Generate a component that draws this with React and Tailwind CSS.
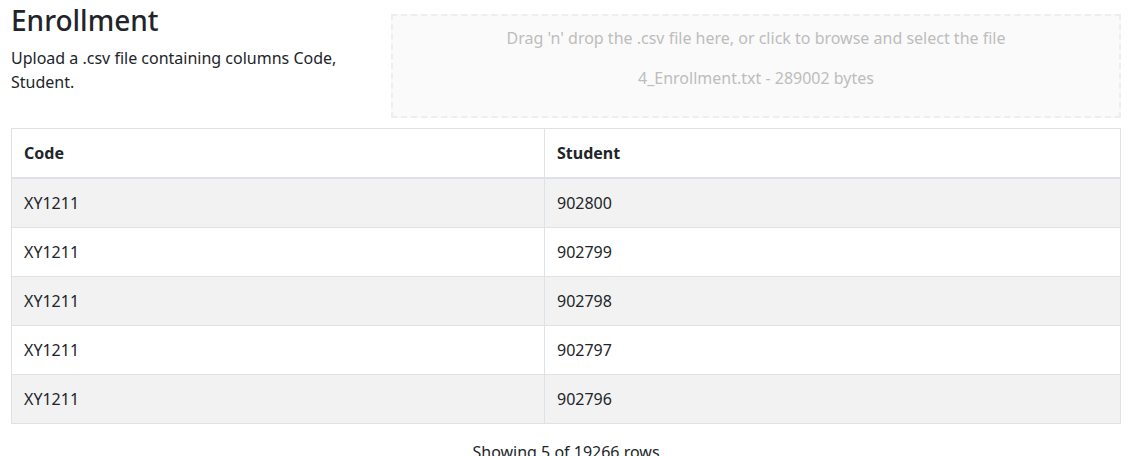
import React from 'react';

const rows = [
  { code: 'XY1211', student: '902800' },
  { code: 'XY1211', student: '902799' },
  { code: 'XY1211', student: '902798' },
  { code: 'XY1211', student: '902797' },
  { code: 'XY1211', student: '902796' },
];

export default function App() {
  return (
    <div
      className="min-h-screen bg-white pl-[11px] pr-[7px] pt-[4px] text-[#212529]"
      style={{ fontFamily: '"Noto Sans", "Open Sans", sans-serif' }}
    >
      <div className="flex items-start gap-[30px]">
        <div className="w-[350px] shrink-0">
          <h3 className="mb-2 text-[28px] font-medium leading-[1.2]">Enrollment</h3>
          <p className="mb-4 text-base leading-6">
            Upload a .csv file containing columns Code, Student.
          </p>
        </div>
        <div className="mt-[10px] flex-1 cursor-pointer border-2 border-dashed border-[#eeeeee] bg-[#fafafa] py-[10px] text-center text-[#bdbdbd]">
          <p className="mb-4 text-base leading-6">
            Drag 'n' drop the .csv file here, or click to browse and select the file
          </p>
          <p className="mb-4 text-base leading-6">4_Enrollment.txt - 289002 bytes</p>
        </div>
      </div>

      <table className="mt-[10px] w-full table-fixed border-collapse border border-[#dee2e6] text-base leading-6">
        <thead>
          <tr>
            <th className="w-[533px] border border-b-2 border-[#dee2e6] px-3 py-3 text-left font-bold">
              Code
            </th>
            <th className="border border-b-2 border-[#dee2e6] px-3 py-3 text-left font-bold">
              Student
            </th>
          </tr>
        </thead>
        <tbody>
          {rows.map((r, i) => (
            <tr key={r.student} className={i % 2 === 0 ? 'bg-[#f2f2f2]' : 'bg-white'}>
              <td className="border border-[#dee2e6] px-3 py-3">{r.code}</td>
              <td className="border border-[#dee2e6] px-3 py-3">{r.student}</td>
            </tr>
          ))}
        </tbody>
      </table>

      <p className="mt-4 text-center text-base leading-6">Showing 5 of 19266 rows</p>
    </div>
  );
}
